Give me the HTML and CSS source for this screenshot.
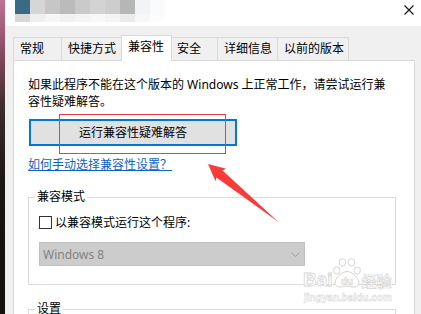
FILE: index.html
```html
<!DOCTYPE html>
<html lang="zh-CN">
<head>
<meta charset="utf-8">
<title>属性 - 兼容性</title>
<link rel="stylesheet" href="styles.css">
</head>
<body>
<div class="screen">
  <div class="edge"></div>
  <div class="window">
    <div class="titlebar">
      <div class="blur"></div>
      <svg class="close" width="10" height="10" viewBox="0 0 10 10"><path d="M0.5 0.5 L9.5 9.5 M9.5 0.5 L0.5 9.5" stroke="#111" stroke-width="1.1" fill="none"/></svg>
    </div>
    <div class="content">
      <div class="tabs">
        <div class="tab tab-general">常规</div>
        <div class="tab tab-shortcut">快捷方式</div>
        <div class="tab tab-active">兼容性</div>
        <div class="tab tab-security">安全</div>
        <div class="tab tab-details">详细信息</div>
        <div class="tab tab-prev">以前的版本</div>
      </div>
      <div class="panel">
        <p class="desc">如果此程序不能在这个版本的 Windows 上正常工作，请尝试运行兼<br>容性疑难解答。</p>
        <button class="run" type="button">运行兼容性疑难解答</button>
        <a class="help" href="#">如何手动选择兼容性设置？</a>
        <fieldset class="group">
          <legend>兼容模式</legend>
          <label class="check"><span class="box"></span>以兼容模式运行这个程序:</label>
          <div class="select">
            <span>Windows 8</span>
            <svg class="chev" width="9" height="5" viewBox="0 0 9 5"><path d="M0.5 0.5 L4.5 4.5 L8.5 0.5" stroke="#a0a0a0" stroke-width="1" fill="none"/></svg>
          </div>
        </fieldset>
        <fieldset class="group group-settings">
          <legend>设置</legend>
        </fieldset>
      </div>
    </div>
  </div>

  <div class="redbox"></div>
  <svg class="arrow" width="421" height="314" viewBox="0 0 421 314">
    <polygon points="208,164 226.2,168.7 222.5,170.6 278.5,222 216.4,177.4 215.5,181.2" fill="#f83c3c"/>
  </svg>
  <div class="watermark">
    <div class="wm-top">
      <span class="wm-bai">Bai</span>
      <svg class="wm-paw" width="28" height="30" viewBox="0 0 28 30">
        <g fill="#fff" stroke="#d4d4d4" stroke-width="1">
          <ellipse cx="9.5" cy="4.5" rx="3.3" ry="3.8"/>
          <ellipse cx="18.5" cy="4.5" rx="3.3" ry="3.8"/>
          <ellipse cx="3.8" cy="12.5" rx="3.2" ry="3.6"/>
          <ellipse cx="24.2" cy="12.5" rx="3.2" ry="3.6"/>
          <path d="M14 13.5 C19 13.5 26 20 26 25 C26 28 23 29.3 20 29 C17 28.7 16 28 14 28 C12 28 11 28.7 8 29 C5 29.3 2 28 2 25 C2 20 9 13.5 14 13.5 Z"/>
        </g>
        <text x="14" y="27" text-anchor="middle" font-family="Liberation Sans" font-weight="bold" font-size="10" fill="#fff" stroke="#d4d4d4" stroke-width="0.6">du</text>
      </svg>
      <span class="wm-jy">经验</span>
    </div>
    <div class="wm-url">jingyan.baidu.com</div>
  </div>
</div>
</body>
</html>
```
FILE: styles.css
```css
* {
  box-sizing: border-box;
}

html,
body {
  margin: 0;
  padding: 0;
}

body {
  width: 421px;
  height: 314px;
  overflow: hidden;
  background: #f0f0f0;
  font-family: "Noto Sans", "Noto Sans CJK SC", sans-serif;
  font-size: 12px;
  color: #000;
}

.screen {
  position: relative;
  display: flex;
  width: 421px;
  height: 314px;
}

.edge {
  flex: none;
  width: 5px;
  background: linear-gradient(#c27293 0, #a45b7a 30px, #7a4657 62px, #3a2d2d 110px, #1c1614 180px, #14100e 100%);
}

.window {
  flex: 1;
  min-width: 0;
  display: flex;
  flex-direction: column;
}

.titlebar {
  flex: none;
  height: 26px;
  background: #fff;
  display: flex;
  justify-content: space-between;
  align-items: flex-start;
}

.blur {
  margin-left: 10px;
  width: 165px;
  height: 22px;
  background:
    linear-gradient(to right,
      #3b6a86 0 15px, #d6d6d6 15px 30px, #c6c6c6 30px 45px, #bbbbbb 45px 60px,
      #cacaca 60px 75px, #d3d3d3 75px 90px, #cdcdcd 90px 105px, #b6b6b6 105px 120px,
      #f1f3f6 120px 135px, #fafbfc 135px 150px, #ffffff 150px) top left / 100% 14px no-repeat,
    linear-gradient(to right,
      #d5d7d9 0 15px, #efefef 15px 30px, #f6f6f6 30px 45px, #f1f1f1 45px 60px,
      #f4f4f4 60px 75px, #f8f8f8 75px 90px, #f4f4f4 90px 105px, #ebebeb 105px 120px,
      #f6f7f9 120px 135px, #fcfcfd 135px 150px, #ffffff 150px) bottom left / 100% 8px no-repeat;
}

.close {
  margin: 5px 7px 0 0;
}

.content {
  flex: 1;
  display: flex;
  flex-direction: column;
  padding: 9px 6px 0 8px;
}

.tabs {
  display: flex;
  align-items: flex-end;
  height: 25px;
}

.tab {
  height: 23px;
  border: 1px solid #d9d9d9;
  border-right: none;
  border-bottom: none;
  background: #f0f0f0;
  line-height: 22px;
  padding-left: 6px;
  white-space: nowrap;
}

.tab-general { width: 48px; }
.tab-shortcut { width: 60px; }
.tab-security { width: 47px; }
.tab-details { width: 60px; }

.tab-prev {
  width: 72px;
  border-right: 1px solid #d9d9d9;
}

.tab-active {
  position: relative;
  z-index: 1;
  width: 51px;
  height: 26px;
  margin-bottom: -1px;
  margin-right: -2px;
  background: #fff;
  border-right: 1px solid #d9d9d9;
}

.panel {
  flex: 1;
  background: #fff;
  border: 1px solid #d9d9d9;
  padding: 16px 18px 0 14px;
}

.desc {
  margin: 0;
  line-height: 16.5px;
  white-space: nowrap;
}

.run {
  display: block;
  margin: 9px 0 0 1px;
  width: 208px;
  height: 27px;
  padding: 0;
  border: 2px solid #0078d7;
  background: #e1e1e1;
  font: inherit;
  color: #000;
  line-height: 23px;
}

.help {
  display: block;
  margin-top: 11px;
  line-height: 16.5px;
  color: #0a64c4;
  text-decoration: underline;
}

.group {
  margin: 15.5px 0 0 0;
  min-width: 0;
  border: 1px solid #dcdcdc;
  padding: 0 10px 18px 10px;
}

.group legend {
  margin-left: -4px;
  padding: 0 2px;
  line-height: 16.5px;
}

.check {
  display: flex;
  align-items: center;
  gap: 3px;
  height: 16.5px;
  margin-top: 8.25px;
  white-space: nowrap;
}

.box {
  flex: none;
  width: 13px;
  height: 13px;
  border: 1px solid #333;
  background: #fff;
}

.select {
  margin-top: 12px;
  width: 266px;
  height: 24px;
  border: 1px solid #bfbfbf;
  background: #cccccc;
  color: #838383;
  display: flex;
  align-items: center;
  justify-content: space-between;
  padding: 0 4px 0 3px;
}

.chev {
  flex: none;
  margin-top: 1px;
}

.group-settings {
  margin-top: 15.75px;
  height: 60px;
}

.redbox {
  position: absolute;
  left: 59px;
  top: 114px;
  width: 167px;
  height: 40px;
  border: 1px solid #ec3d45;
}

.arrow {
  position: absolute;
  left: 0;
  top: 0;
  pointer-events: none;
}

.watermark {
  position: absolute;
  left: 303px;
  top: 257px;
  width: 92px;
  color: #fff;
}

.wm-top {
  display: flex;
  align-items: flex-end;
  height: 31px;
}

.wm-bai {
  font-family: "Liberation Sans", sans-serif;
  font-weight: bold;
  font-size: 19px;
  line-height: 19px;
  -webkit-text-stroke: 0.8px #d4d4d4;
  margin-bottom: -1px;
}

.wm-paw {
  flex: none;
  margin-left: 0;
}

.wm-jy {
  font-family: "Noto Sans CJK SC", sans-serif;
  font-weight: bold;
  font-size: 15px;
  line-height: 17px;
  -webkit-text-stroke: 0.7px #d4d4d4;
  margin-left: 1px;
  margin-bottom: -1px;
}

.wm-url {
  margin-top: 4px;
  font-family: "Liberation Sans", sans-serif;
  font-weight: bold;
  font-size: 10px;
  line-height: 11px;
  -webkit-text-stroke: 0.5px #d4d4d4;
  padding-left: 1px;
}
```
